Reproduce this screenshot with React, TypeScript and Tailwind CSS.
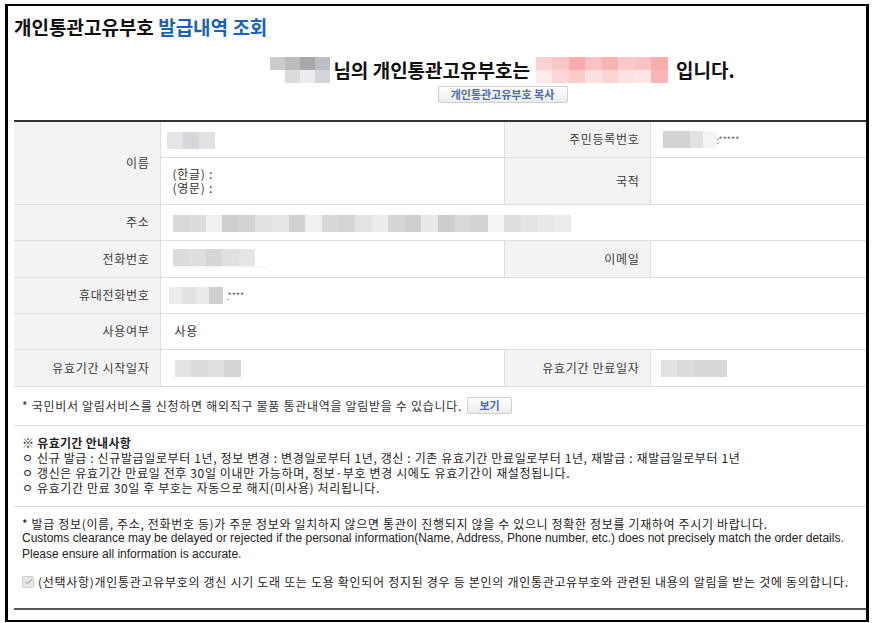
import React from "react";

const Mosaic = ({ cells, h = "h-[17px]", w = "w-[16px]" }: { cells: string[]; h?: string; w?: string }) => (
  <span className="inline-flex align-middle">
    {cells.map((c, i) => (
      <span key={i} className={`${w} ${h} ${c}`} />
    ))}
  </span>
);

const Label = ({ children, rowSpan }: { children: React.ReactNode; rowSpan?: number }) => (
  <th
    rowSpan={rowSpan}
    className="bg-[#f3f3f3] border-b border-r border-[#dedede] text-right pr-[10px] font-normal text-[12px] tracking-[0.7px] text-[#3a3a3a]"
  >
    {children}
  </th>
);

const cellCls = "border-b border-r border-[#dedede] text-[12px] tracking-[0.7px] text-[#333] pl-[12px] align-middle";

const addrCells = [
  "bg-[#d9d9d9]", "bg-[#dcdcdc]", "bg-[#f0f0f0]", "bg-[#cfcfcf]", "bg-[#d2d2d2]", "bg-[#e2e2e2]",
  "bg-[#e6e6e6]", "bg-[#d0d0d2]", "bg-[#f0f0f0]", "bg-[#d8d8d8]", "bg-[#d5d5d5]", "bg-[#e4e4e4]",
  "bg-[#ececec]", "bg-[#d6d6d6]", "bg-[#cfcfcf]", "bg-[#e9e9e9]", "bg-[#cdcdcd]", "bg-[#d9d9d9]",
  "bg-[#d2d2d2]", "bg-[#f4f4f4]", "bg-[#dedede]", "bg-[#e4e4e4]", "bg-[#e9e9e9]", "bg-[#ececec]",
];

export default function App() {
  return (
    <div className="pt-[4px] pl-[5px] bg-white font-['Noto_Sans_CJK_KR','Noto_Sans',sans-serif]">
      <div className="w-[864px] h-[618px] border-y-2 border-x-[3px] border-black pl-[6px] flex flex-col">
        <h1 className="mt-[8px] h-[26px] leading-[26px] text-[19px] font-bold text-[#111]">
          개인통관고유부호 <span className="text-[#1a62b8]">발급내역 조회</span>
        </h1>

        <div className="ml-[257px] w-[463px] mt-[17px] flex flex-col items-center">
          <div className="flex items-center h-[26px] text-[19px] font-bold text-[#111] whitespace-nowrap">
            <span className="flex flex-col">
              <Mosaic h="h-[13px]" cells={["bg-[#cbcbcb]", "bg-[#bcbcbc]", "bg-[#a8a8a8]", "bg-[#bdbfc4]"]} w="w-[15px]" />
              <Mosaic h="h-[13px]" cells={["bg-white", "bg-[#dcdcdc]", "bg-[#ececec]", "bg-[#d3d5da]"]} w="w-[15px]" />
            </span>
            <span className="ml-[3px]">님의 개인통관고유부호는</span>
            <span className="flex flex-col ml-[6px]">
              <Mosaic
                h="h-[13px]"
                w="w-[16.5px]"
                cells={["bg-[#fcd2d2]", "bg-[#fcc6c6]", "bg-[#f9abab]", "bg-[#fbc2c2]", "bg-[#f9b2b2]", "bg-[#fcc8c8]", "bg-[#fbc4c4]", "bg-[#f9adad]"]}
              />
              <Mosaic
                h="h-[13px]"
                w="w-[16.5px]"
                cells={["bg-[#fdeaea]", "bg-[#fcd6d6]", "bg-[#fbcaca]", "bg-[#fde0e0]", "bg-[#fcd2d2]", "bg-[#fde2e2]", "bg-[#fde6e6]", "bg-[#f9b6b6]"]}
              />
            </span>
            <span className="ml-[8px]">입니다.</span>
          </div>
          <button className="mt-[3px] h-[17px] w-[130px] rounded-[2px] border border-[#cfcfcf] bg-gradient-to-b from-white to-[#ececec] text-[11px] leading-[15px] font-bold text-[#4a6bb8]">
            개인통관고유부호 복사
          </button>
        </div>

        <table className="mt-[17px] w-full table-fixed border-collapse border-t-2 border-[#333]">
          <colgroup>
            <col className="w-[146px]" />
            <col className="w-[344px]" />
            <col className="w-[146px]" />
            <col />
          </colgroup>
          <tbody>
            <tr className="h-[36px]">
              <Label rowSpan={2}>이름</Label>
              <td className={cellCls + " !pl-[6px]"}>
                <Mosaic cells={["bg-[#e6e4e4]", "bg-[#d6d7db]", "bg-[#e2e2e4]"]} />
              </td>
              <Label>주민등록번호</Label>
              <td className={cellCls + " border-r-0"}>
                <span className="flex items-center">
                  <Mosaic cells={["bg-[#d2d2d2]", "bg-[#d2d2d2]", "bg-[#e2e2e2]", "bg-[#f4f4f4]"]} w="w-[13.5px]" />
                  <span className="text-[10px] text-[#777] tracking-[-0.5px]">:*****</span>
                </span>
              </td>
            </tr>
            <tr className="h-[47px]">
              <td className={cellCls}>
                <p className="h-[14px] leading-[14px]">(한글) :</p>
                <p className="h-[14px] leading-[14px]">(영문) :</p>
              </td>
              <Label>국적</Label>
              <td className={cellCls + " border-r-0"} />
            </tr>
            <tr className="h-[36px]">
              <Label>주소</Label>
              <td colSpan={3} className={cellCls + " border-r-0"}>
                <Mosaic cells={addrCells} w="w-[16.6px]" />
              </td>
            </tr>
            <tr className="h-[37px]">
              <Label>전화번호</Label>
              <td className={cellCls}>
                <span className="flex flex-col">
                  <Mosaic cells={["bg-[#dcdcdc]", "bg-[#dedede]", "bg-[#d6d6d6]", "bg-[#e0e0e0]", "bg-[#e6e6e6]"]} w="w-[16.6px]" />
                  <Mosaic h="h-[2px]" cells={["bg-[#f6f6f6]", "bg-[#f6f6f6]", "bg-[#f6f6f6]", "bg-[#f6f6f6]", "bg-[#f6f6f6]", "bg-[#f8f8f8]"]} w="w-[16px]" />
                </span>
              </td>
              <Label>이메일</Label>
              <td className={cellCls + " border-r-0"} />
            </tr>
            <tr className="h-[36px]">
              <Label>휴대전화번호</Label>
              <td colSpan={3} className={cellCls + " border-r-0 !pl-[8px]"}>
                <span className="flex items-center">
                  <Mosaic cells={["bg-[#ececec]", "bg-[#e2e2e2]", "bg-[#ebebeb]", "bg-[#d0d0d0]"]} w="w-[13.5px]" />
                  <span className="ml-[4px] text-[10px] text-[#777] tracking-[-0.5px]">.****</span>
                </span>
              </td>
            </tr>
            <tr className="h-[36px]">
              <Label>사용여부</Label>
              <td colSpan={3} className={cellCls + " border-r-0 !pl-[14px]"}>
                사용
              </td>
            </tr>
            <tr className="h-[37px]">
              <Label>유효기간 시작일자</Label>
              <td className={cellCls + " !pl-[14px]"}>
                <Mosaic cells={["bg-[#e4e2e2]", "bg-[#dcdcdc]", "bg-[#e0e0e0]", "bg-[#d6d6d6]"]} w="w-[16.5px]" />
              </td>
              <Label>유효기간 만료일자</Label>
              <td className={cellCls + " border-r-0 !pl-[10px]"}>
                <Mosaic cells={["bg-[#e2e2e2]", "bg-[#dcdcdc]", "bg-[#d8d8d8]", "bg-[#d8d8d8]"]} w="w-[16.5px]" />
              </td>
            </tr>
            <tr className="h-[39px]">
              <td colSpan={4} className="border-b border-[#dedede] pl-[8px] text-[12px] tracking-[0.7px] text-[#333]">
                <span className="flex items-center">
                  * 국민비서 알림서비스를 신청하면 해외직구 물품 통관내역을 알림받을 수 있습니다.
                  <button className="ml-[5px] h-[17px] w-[45px] rounded-[2px] border border-[#cfcfcf] bg-gradient-to-b from-white to-[#ececec] text-[11px] leading-[15px] font-bold tracking-normal text-[#4a6bb8]">
                    보기
                  </button>
                </span>
              </td>
            </tr>
          </tbody>
        </table>

        <div className="border-b border-[#dedede] pl-[8px] pt-[9px] pb-[11px] text-[12px] tracking-[0.63px] leading-[15px] text-[#222]">
          <p className="font-bold tracking-[0.3px]">※ 유효기간 안내사항</p>
          <p>ㅇ 신규 발급 : 신규발급일로부터 1년, 정보 변경 : 변경일로부터 1년, 갱신 : 기존 유효기간 만료일로부터 1년, 재발급 : 재발급일로부터 1년</p>
          <p>ㅇ 갱신은 유효기간 만료일 전후 30일 이내만 가능하며, 정보·부호 변경 시에도 유효기간이 재설정됩니다.</p>
          <p>ㅇ 유효기간 만료 30일 후 부호는 자동으로 해지(미사용) 처리됩니다.</p>
        </div>

        <div className="border-b-2 border-[#555] pl-[8px] pt-[9px] pb-[18px] text-[12px] leading-[15.5px] text-[#222]">
          <p className="tracking-[0.65px]">* 발급 정보(이름, 주소, 전화번호 등)가 주문 정보와 일치하지 않으면 통관이 진행되지 않을 수 있으니 정확한 정보를 기재하여 주시기 바랍니다.</p>
          <p className="font-['Liberation_Sans',sans-serif] text-[12px] whitespace-nowrap">
            Customs clearance may be delayed or rejected if the personal information(Name, Address, Phone number, etc.) does not precisely match the order details.
          </p>
          <p className="font-['Liberation_Sans',sans-serif] text-[12px]">Please ensure all information is accurate.</p>
          <p className="mt-[12px] flex items-center tracking-[0.7px] whitespace-nowrap">
            <span className="w-[12px] h-[12px] shrink-0 rounded-[2px] border border-[#cfcfcf] bg-[#e8e8e8] flex items-center justify-center mr-[4px]">
              <svg viewBox="0 0 10 10" className="w-[9px] h-[9px]">
                <path d="M1.5 5.2 L4 7.5 L8.5 2.5" fill="none" stroke="#b8b8b8" strokeWidth="1.6" />
              </svg>
            </span>
            (선택사항)개인통관고유부호의 갱신 시기 도래 또는 도용 확인되어 정지된 경우 등 본인의 개인통관고유부호와 관련된 내용의 알림을 받는 것에 동의합니다.
          </p>
        </div>
      </div>
    </div>
  );
}
